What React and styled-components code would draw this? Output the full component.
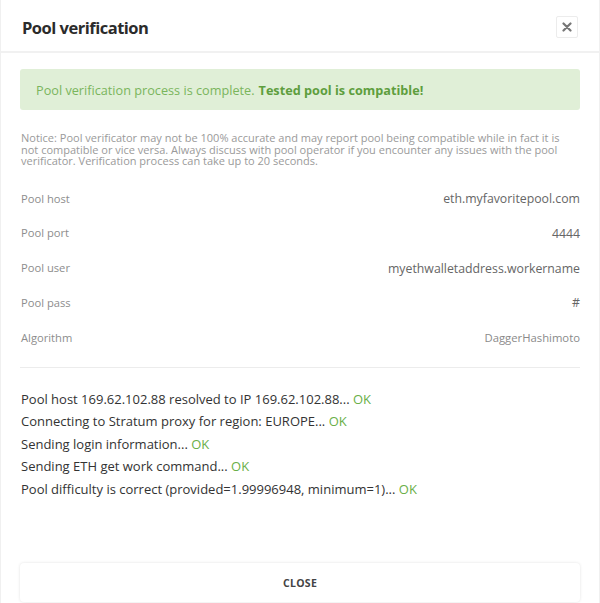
import React from 'react';
import styled, { createGlobalStyle } from 'styled-components';

const GlobalStyle = createGlobalStyle`
    html, body {
        margin: 0;
        padding: 0;
        background: #fff;
    }
    body {
        font-family: "Open Sans", "Noto Sans", sans-serif;
        color: #333;
    }
`

const poolInfo = [
    { label: 'Pool host', value: 'eth.myfavoritepool.com' },
    { label: 'Pool port', value: '4444' },
    { label: 'Pool user', value: 'myethwalletaddress.workername' },
    { label: 'Pool pass', value: '#' },
    { label: 'Algorithm', value: 'DaggerHashimoto', small: true },
]

const logLines = [
    'Pool host 169.62.102.88 resolved to IP 169.62.102.88...',
    'Connecting to Stratum proxy for region: EUROPE...',
    'Sending login information...',
    'Sending ETH get work command...',
    'Pool difficulty is correct (provided=1.99996948, minimum=1)...',
]

const noticeLines = [
    'Notice: Pool verificator may not be 100% accurate and may report pool being compatible while in fact it is',
    'not compatible or vice versa. Always discuss with pool operator if you encounter any issues with the pool',
    'verificator. Verification process can take up to 20 seconds.',
]

function App(){
    return(
        <>
            <GlobalStyle />
            <Modal>
                <Header>
                    <Title>Pool verification</Title>
                    <CloseX aria-label="close">
                        <svg width="10" height="10" viewBox="0 0 10 10">
                            <path d="M1.5 1.5 L8.5 8.5 M8.5 1.5 L1.5 8.5" stroke="#777" strokeWidth="2.2" strokeLinecap="round" />
                        </svg>
                    </CloseX>
                </Header>
                <Body>
                    <Alert>
                        Pool verification process is complete. <b>Tested pool is compatible!</b>
                    </Alert>
                    <Notice>
                        {noticeLines.map((line)=>(
                            <NoticeLine key={line}>{line}</NoticeLine>
                        ))}
                    </Notice>
                    <InfoList>
                        {poolInfo.map((item)=>(
                            <InfoRow key={item.label}>
                                <Label>{item.label}</Label>
                                <Value $small={item.small}>{item.value}</Value>
                            </InfoRow>
                        ))}
                    </InfoList>
                    <Divider />
                    <Log>
                        {logLines.map((line)=>(
                            <LogLine key={line}>{line} <Ok>OK</Ok></LogLine>
                        ))}
                    </Log>
                </Body>
                <Footer>
                    <CloseButton>CLOSE</CloseButton>
                </Footer>
            </Modal>
        </>
    )
}

const Modal = styled.div`
    box-sizing: border-box;
    width: 600px;
    height: 603px;
    margin: 0 auto;
    border-left: 1px solid #f0f0f0;
    border-right: 1px solid #f0f0f0;
    background: #fff;
    display: flex;
    flex-direction: column;
    overflow: hidden;
`
const Header = styled.div`
    height: 53px;
    box-sizing: border-box;
    padding: 3px 21px 0 21px;
    border-bottom: 2px solid #f1f1f1;
    display: flex;
    align-items: center;
    justify-content: space-between;
`
const Title = styled.h1`
    margin: 0;
    font-size: 16.5px;
    font-weight: 700;
    color: #2b2b2b;
    letter-spacing: -0.5px;
`
const CloseX = styled.div`
    width: 22px;
    height: 22px;
    box-sizing: border-box;
    border: 1px solid #ececec;
    border-radius: 2px;
    display: flex;
    align-items: center;
    justify-content: center;
    margin-top: -1px;
`
const Body = styled.div`
    padding: 16px 19px 0 19px;
    flex: 1;
`
const Alert = styled.div`
    height: 41px;
    box-sizing: border-box;
    padding: 0 16px;
    display: flex;
    align-items: center;
    gap: 4px;
    background: #e0efd7;
    border-radius: 3px;
    color: #7ab55c;
    font-size: 12.7px;
    b {
        color: #5e9e3e;
        font-weight: 700;
    }
`
const Notice = styled.div`
    margin: 22px 0 0 1px;
    display: flex;
    flex-direction: column;
`
const NoticeLine = styled.div`
    font-size: 11px;
    line-height: 11.6px;
    color: #9a9a9a;
    white-space: nowrap;
`
const InfoList = styled.div`
    margin-top: 14px;
    display: flex;
    flex-direction: column;
`
const InfoRow = styled.div`
    height: 34.75px;
    display: flex;
    justify-content: space-between;
    align-items: center;
    box-sizing: border-box;
`
const Label = styled.span`
    font-size: 11.2px;
    color: #8d8d8d;
    margin-left: 1px;
`
const Value = styled.span`
    font-size: ${props => props.$small ? '11.3px' : '12.3px'};
    color: ${props => props.$small ? '#8a8a8a' : '#666'};
    padding-top: 1px;
`
const Divider = styled.div`
    height: 1px;
    background: #ececec;
    margin-top: 12px;
`
const Log = styled.div`
    margin-top: 20px;
    display: flex;
    flex-direction: column;
`
const LogLine = styled.div`
    font-size: 13px;
    line-height: 22.6px;
    color: #333;
    margin-left: 1px;
`
const Ok = styled.span`
    color: #6aaf48;
`
const Footer = styled.div`
    padding: 0 19px 0 19px;
    height: 40px;
`
const CloseButton = styled.div`
    height: 39px;
    border-radius: 4px;
    box-shadow: 0 0 3px rgba(0,0,0,0.12);
    display: flex;
    align-items: center;
    justify-content: center;
    font-size: 10.5px;
    font-weight: 700;
    color: #444;
    letter-spacing: 0.3px;
`

export default App
